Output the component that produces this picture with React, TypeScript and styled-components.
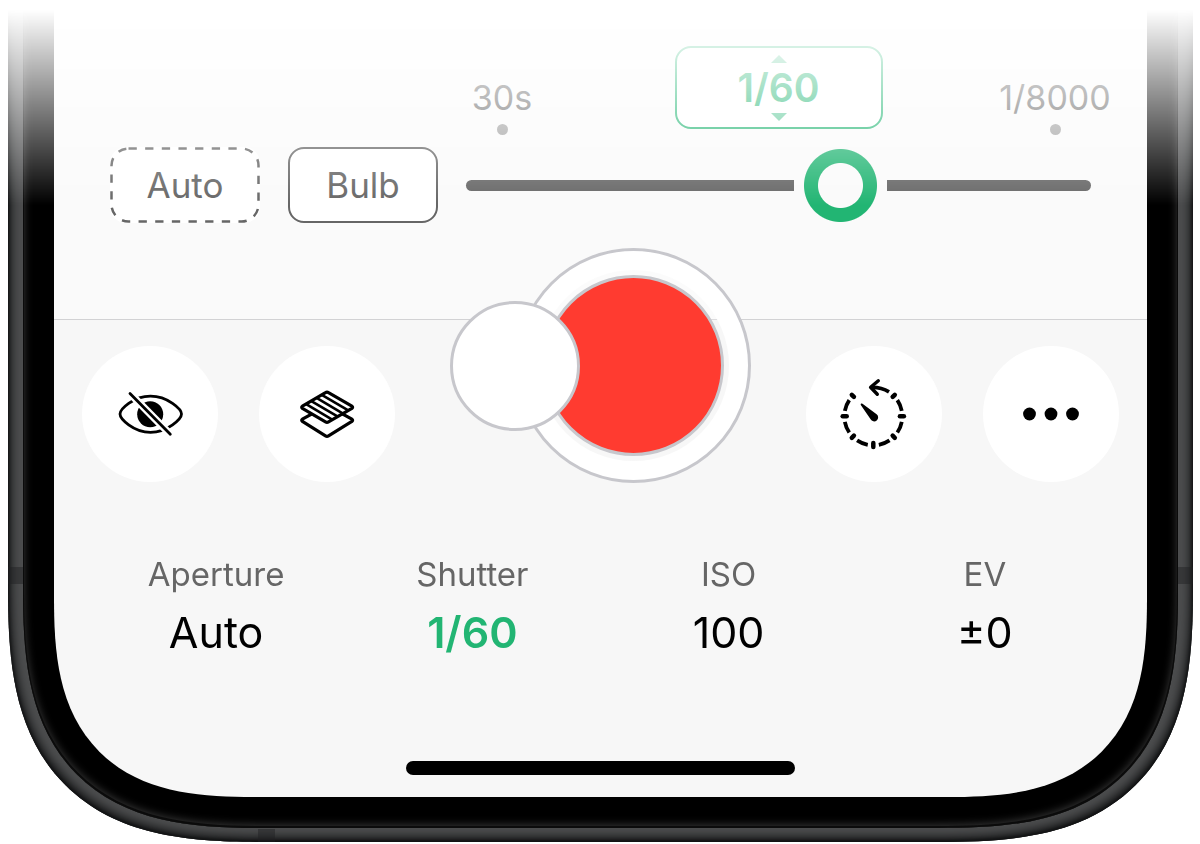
import React, { useState } from "react";
import styled, { createGlobalStyle } from "styled-components";

const green = "#22b573";
const hairline = "#c7c7cc";
const grey = "#666666";

const GlobalStyle = createGlobalStyle`
  *, *::before, *::after { box-sizing: border-box; }
  body { margin: 0; background: #ffffff; font-family: Inter, "Liberation Sans", sans-serif; }
  button { font: inherit; padding: 0; cursor: pointer; }
`;

/* ---------- Device ---------- */

const Stage = styled.main`
  padding: 0 7px 2px 8px;
  mask-image: linear-gradient(to bottom, transparent 10px, #000 205px);
`;

const Chassis = styled.div`
  position: relative;
  padding: 0 15px 14px;
  overflow: hidden;
  background: #4c4d4e;
  border-radius: 0 0 195px 195px;
  box-shadow: inset 0 -1px 3px 1px #111213, inset 0 -2px 9px 4px #1c1d1e;

  @supports (corner-shape: round) {
    border-radius: 0 0 255px 255px;
    corner-shape: superellipse(1.45);
  }
`;

const Bezel = styled.div`
  padding: 0 31px 31px;
  background: #000000;
  border-radius: 0 0 182px 182px;
  box-shadow: inset 0 -1px 0 1px #0b0b0b, inset 0 -2px 8px 1px #383838;

  @supports (corner-shape: round) {
    border-radius: 0 0 240px 240px;
    corner-shape: superellipse(1.45);
  }
`;

const Screen = styled.div`
  display: flex;
  flex-direction: column;
  overflow: hidden;
  background: #f7f7f7;
  border-radius: 0 0 155px 155px;

  @supports (corner-shape: round) {
    border-radius: 0 0 200px 200px;
    corner-shape: superellipse(1.43);
  }
`;

const Antenna = styled.span<{ $edge: "left" | "right" | "bottom" }>`
  position: absolute;
  background: rgba(30, 32, 34, 0.45);
  ${({ $edge }) =>
    $edge === "bottom"
      ? "left: 250px; bottom: 0; width: 17px; height: 13px;"
      : `${$edge}: 0; top: 567px; width: 15px; height: 17px;`}
`;

/* ---------- Exposure panel ---------- */

const Exposure = styled.section`
  display: flex;
  align-items: flex-end;
  gap: 28px;
  padding: 46px 56px 96px;
  background: #fafafa;
  border-bottom: 1px solid #d2d2d4;
`;

const ModeButton = styled.button<{ $dashed?: boolean }>`
  position: relative;
  flex: none;
  width: 150px;
  height: 76px;
  color: ${grey};
  font-size: 35px;
  line-height: 40px;
  background: #ffffff;
  border: ${({ $dashed }) => ($dashed ? "0" : `2px solid ${grey}`)};
  border-radius: 16px;
`;

const DashOutline = styled.svg`
  position: absolute;
  inset: 0;
  width: 100%;
  height: 100%;
`;

const Dial = styled.div`
  flex: 1;
  min-width: 0;
  display: flex;
  flex-direction: column;
  gap: 20px;
  padding-bottom: 1px;
`;

const DialHeader = styled.div`
  display: grid;
  grid-template-columns: 72px 1fr 72px;
  align-items: end;
  justify-items: center;
`;

const Limit = styled.div`
  display: flex;
  flex-direction: column;
  align-items: center;
  gap: 6px;
  color: ${grey};
  font-size: 34px;
  line-height: 40px;
  white-space: nowrap;

  &::after {
    content: "";
    width: 11px;
    height: 11px;
    margin-bottom: -6px;
    border-radius: 50%;
    background: #a1a1a1;
  }
`;

const ValueBox = styled.button`
  display: flex;
  flex-direction: column;
  align-items: center;
  justify-content: center;
  width: 208px;
  height: 83px;
  color: ${green};
  background: #ffffff;
  border: 2px solid ${green};
  border-radius: 16px;
  font-size: 39px;
  font-weight: 600;
  line-height: 50px;
`;

const Arrow = styled.svg`
  display: block;
  width: 16px;
  height: 8px;
  opacity: 0.7;
`;

const Range = styled.input`
  appearance: none;
  display: block;
  width: 100%;
  height: 73px;
  margin: 0;
  background: transparent;

  &::-webkit-slider-runnable-track {
    height: 11px;
    border-radius: 6px;
    background: ${grey};
  }

  &::-webkit-slider-thumb {
    appearance: none;
    width: 93px;
    height: 73px;
    margin-top: -31px;
    border: 0;
    background: radial-gradient(
      circle closest-side,
      #fafafa 22px,
      ${green} 23px,
      ${green} 36px,
      #fafafa 37px
    );
  }
`;

/* ---------- Shutter row ---------- */

const Controls = styled.section`
  display: flex;
  align-items: flex-start;
  justify-content: space-between;
  height: 165px;
  padding: 26px 28px 0;
`;

const ToolGroup = styled.div`
  display: flex;
  gap: 41px;
`;

const ToolButton = styled.button`
  width: 136px;
  height: 136px;
  color: #000000;
  background: #ffffff;
  border: 0;
  border-radius: 50%;

  svg { display: block; width: 136px; height: 136px; }
`;

const Capture = styled.div`
  display: flex;
  align-items: center;
  margin-top: -98px;
`;

const LensToggle = styled.button`
  z-index: 1;
  width: 130px;
  height: 130px;
  margin-right: -64px;
  background: #ffffff;
  border: 3px solid ${hairline};
  border-radius: 50%;
`;

const ShutterRing = styled.div`
  display: grid;
  place-items: center;
  width: 235px;
  height: 235px;
  background: #ffffff;
  border: 3px solid ${hairline};
  border-radius: 50%;
`;

const ShutterWell = styled.div`
  padding: 5px;
  border-radius: 50%;
  background: linear-gradient(#fbfbfb 49px, #dcdcde 49px, #dcdcde 50px, #f7f7f7 50px);
`;

const ShutterButton = styled.button`
  display: block;
  width: 181px;
  height: 181px;
  background: #ff3b30;
  border: 3px solid ${hairline};
  border-radius: 50%;
`;

/* ---------- Readings ---------- */

const Readings = styled.section`
  display: grid;
  grid-template-columns: repeat(4, 1fr);
  padding: 69px 34px 0;
`;

const Reading = styled.button<{ $active?: boolean }>`
  display: flex;
  flex-direction: column;
  align-items: center;
  gap: 12px;
  background: none;
  border: 0;
  color: ${({ $active }) => ($active ? green : "#000000")};
  font-weight: ${({ $active }) => ($active ? 600 : 400)};
`;

const ReadingLabel = styled.span`
  color: ${grey};
  font-size: 33px;
  font-weight: 400;
  line-height: 40px;
`;

const ReadingValue = styled.span`
  font-size: 43px;
  line-height: 52px;
`;

const HomeBar = styled.div`
  width: 389px;
  height: 14px;
  margin: 103px auto 22px;
  border-radius: 7px;
  background: #000000;
`;

/* ---------- Icons ---------- */

const EyeOffIcon = () => (
  <svg viewBox="0 0 136 136" fill="none" aria-hidden="true">
    <path
      d="M38 68C38 63.500 51 50.200 68.500 50.200S99.500 63.500 99.500 68C99.500 72.500 86 86.300 68.500 86.300S38 72.500 38 68Z"
      stroke="#000"
      strokeWidth="2.800"
    />
    <circle cx="68.200" cy="68.200" r="13" fill="#000" />
    <path d="M46 45.300L90.300 90.300" stroke="#fff" strokeWidth="7.500" />
    <path d="M48 47.500L88.300 88.300" stroke="#000" strokeWidth="2.800" strokeLinecap="round" />
  </svg>
);

const LayersIcon = () => (
  <svg viewBox="0 0 136 136" fill="none" stroke="#000" strokeLinejoin="round" aria-hidden="true">
    <path
      d="M53 67.800L43.400 73.200Q42 74.300 43.400 75.400L66.500 89.800Q68 90.800 69.500 89.800L92.900 75.400Q94.300 74.300 92.900 73.200L83.300 67.800"
      strokeWidth="3.200"
    />
    <path
      d="M66.500 46.600Q68 45.600 69.500 46.600L92.900 60.200Q94.300 61.300 92.900 62.400L69.500 75.800Q68 76.800 66.500 75.800L43.400 62.400Q42 61.300 43.400 60.200Z"
      strokeWidth="3.200"
    />
    {[0.2, 0.4, 0.6, 0.8].map((t) => (
      <path
        key={t}
        d={`M${42 + 26 * t} ${61.3 - 15.6 * t}L${68 + 26 * t} ${76.7 - 15.6 * t}`}
        strokeWidth="2.600"
      />
    ))}
  </svg>
);

const polar = (radius: number, degrees: number) => {
  const a = (degrees * Math.PI) / 180;
  return `${67.3 + radius * Math.cos(a)} ${70.3 + radius * Math.sin(a)}`;
};

const TimerIcon = () => (
  <svg viewBox="0 0 136 136" fill="none" stroke="#000" aria-hidden="true">
    {[-45, 0, 45, 90, 135, 180, 225].map((deg) => (
      <path
        key={deg}
        d={`M${polar(deg % 90 === 0 ? 26.6 : 27.4, deg)}L${polar(deg % 90 === 0 ? 30.6 : 30.4, deg)}`}
        strokeWidth="4.500"
        strokeLinecap="round"
      />
    ))}
    {[-34, 11, 56, 101, 146, 191].map((deg) => (
      <path
        key={deg}
        d={`M${polar(29, deg)}A29 29 0 0 1 ${polar(29, deg + 23)}`}
        strokeWidth="3.800"
      />
    ))}
    <path d="M65 41.400Q75 41 83 45.800" strokeWidth="3.800" />
    <path
      d="M72.300 34.800L64.600 41.300L71.300 48.300"
      strokeWidth="3.400"
      strokeLinecap="round"
      strokeLinejoin="round"
    />
    <path
      d="M55.300 57.600Q54.300 58 54.800 59L64.600 73.200A4 4 0 1 0 70.600 68.200L56.500 57.800Q55.800 57.300 55.300 57.600Z"
      fill="#000"
      stroke="none"
    />
  </svg>
);

const MoreIcon = () => (
  <svg viewBox="0 0 136 136" aria-hidden="true">
    <circle cx="46.500" cy="68" r="6.400" />
    <circle cx="68" cy="68" r="6.400" />
    <circle cx="89.500" cy="68" r="6.400" />
  </svg>
);

const readings = [
  { label: "Aperture", value: "Auto" },
  { label: "Shutter", value: "1/60", active: true },
  { label: "ISO", value: "100" },
  { label: "EV", value: "±0" },
];

export default function App() {
  const [step, setStep] = useState(37);

  return (
    <>
      <GlobalStyle />
      <Stage>
        <Chassis>
          <Bezel>
            <Screen>
              <Exposure>
                <ModeButton type="button" $dashed>
                  <DashOutline viewBox="0 0 150 76" aria-hidden="true">
                    <rect
                      x="1.500"
                      y="1.500"
                      width="147"
                      height="73"
                      rx="17"
                      fill="none"
                      stroke={grey}
                      strokeWidth="2.500"
                      strokeDasharray="8.300 8.350"
                    />
                  </DashOutline>
                  Auto
                </ModeButton>
                <ModeButton type="button">Bulb</ModeButton>
                <Dial>
                  <DialHeader>
                    <Limit>30s</Limit>
                    <ValueBox type="button">
                      <Arrow viewBox="0 0 16 8" aria-hidden="true">
                        <path d="M0 8L8 0L16 8Z" fill={green} />
                      </Arrow>
                      1/60
                      <Arrow viewBox="0 0 16 8" aria-hidden="true">
                        <path d="M0 0L8 8L16 0Z" fill={green} />
                      </Arrow>
                    </ValueBox>
                    <Limit>1/8000</Limit>
                  </DialHeader>
                  <Range
                    type="range"
                    min={0}
                    max={60}
                    value={step}
                    onChange={(e) => setStep(Number(e.target.value))}
                    aria-label="Shutter speed"
                  />
                </Dial>
              </Exposure>

              <Controls>
                <ToolGroup>
                  <ToolButton type="button" aria-label="Hide overlays">
                    <EyeOffIcon />
                  </ToolButton>
                  <ToolButton type="button" aria-label="Layers">
                    <LayersIcon />
                  </ToolButton>
                </ToolGroup>
                <Capture>
                  <LensToggle type="button" aria-label="Photo mode" />
                  <ShutterRing>
                    <ShutterWell>
                      <ShutterButton type="button" aria-label="Record" />
                    </ShutterWell>
                  </ShutterRing>
                </Capture>
                <ToolGroup>
                  <ToolButton type="button" aria-label="Timer">
                    <TimerIcon />
                  </ToolButton>
                  <ToolButton type="button" aria-label="More">
                    <MoreIcon />
                  </ToolButton>
                </ToolGroup>
              </Controls>

              <Readings>
                {readings.map((r) => (
                  <Reading key={r.label} type="button" $active={r.active}>
                    <ReadingLabel>{r.label}</ReadingLabel>
                    <ReadingValue>{r.value}</ReadingValue>
                  </Reading>
                ))}
              </Readings>

              <HomeBar />
            </Screen>
          </Bezel>
          <Antenna $edge="left" />
          <Antenna $edge="right" />
          <Antenna $edge="bottom" />
        </Chassis>
      </Stage>
    </>
  );
}
